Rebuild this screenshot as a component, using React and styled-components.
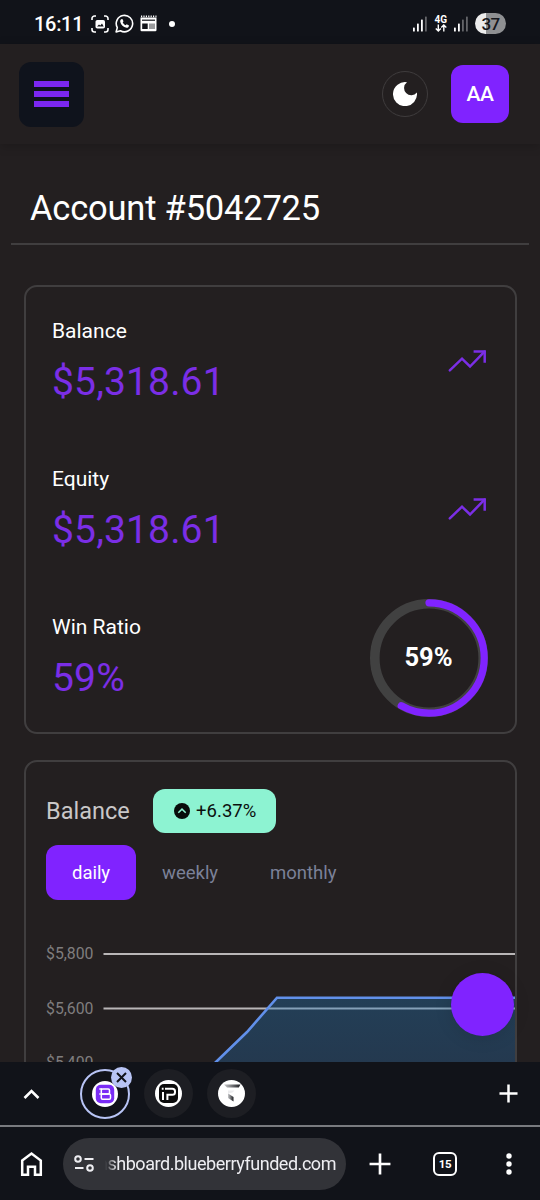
import styled, { createGlobalStyle } from "styled-components";

const GlobalStyle = createGlobalStyle`
    * {
        box-sizing: border-box;
    }

    body {
        margin: 0;
        background-color: #231f20;
        font-family: Roboto, "Liberation Sans", sans-serif;
    }

    svg {
        display: block;
    }
`;

const Screen = styled.div`
    position: relative;
    display: flex;
    flex-direction: column;
    width: 540px;
    height: 1200px;
    overflow: hidden;
`;

const StatusBar = styled.div`
    display: flex;
    justify-content: space-between;
    align-items: center;
    height: 44px;
    padding: 3px 34px 0 34px;
    background-color: #111319;
    color: white;
    flex-shrink: 0;
`;

const StatusGroup = styled.div`
    display: flex;
    align-items: center;
    gap: ${props => props.gap};
`;

const Time = styled.span`
    font-size: 20px;
    font-weight: 500;
    line-height: 24px;
    letter-spacing: -0.3px;
    margin-right: 2px;
`;

const Dot = styled.span`
    width: 6px;
    height: 6px;
    margin-left: 6px;
    border-radius: 50%;
    background-color: white;
`;

const Network = styled.div`
    display: flex;
    flex-direction: column;
    align-items: center;
    font-size: 10px;
    font-weight: 700;
    line-height: 9px;
`;

const Battery = styled.div`
    width: 31px;
    height: 21px;
    border-radius: 11px;
    background: linear-gradient(to right, #ececec 36%, #8f9092 36%);
    color: #15171c;
    font-size: 17px;
    font-weight: 500;
    line-height: 22px;
    letter-spacing: -0.6px;
    text-align: center;
`;

const Header = styled.header`
    display: flex;
    justify-content: space-between;
    align-items: center;
    height: 100px;
    padding: 0 31px 0 19px;
    box-shadow: 0 2px 10px rgba(0, 0, 0, 0.2);
    flex-shrink: 0;
`;

const MenuButton = styled.button`
    display: flex;
    flex-direction: column;
    align-items: center;
    justify-content: center;
    gap: 4.5px;
    width: 65px;
    height: 65px;
    padding: 0;
    border: none;
    border-radius: 12px;
    background-color: #0f131c;
`;

const MenuLine = styled.span`
    width: 35px;
    height: 5.5px;
    background-color: #7b27f0;
`;

const HeaderRight = styled.div`
    display: flex;
    align-items: center;
    gap: 23px;
`;

const ThemeButton = styled.button`
    display: flex;
    align-items: center;
    justify-content: center;
    width: 46px;
    height: 46px;
    padding: 0;
    border: 1px solid #3f3c3d;
    border-radius: 50%;
    background-color: transparent;
`;

const Avatar = styled.div`
    width: 58px;
    height: 58px;
    border-radius: 12px;
    background-color: #8023ff;
    color: white;
    font-size: 21px;
    font-weight: 500;
    line-height: 58px;
    letter-spacing: -0.4px;
    text-align: center;
`;

const Main = styled.main`
    flex: 1;
    min-height: 0;
    overflow: hidden;
`;

const Title = styled.h1`
    height: 101px;
    margin: 0 11px 40px;
    padding: 43px 0 0 19px;
    border-bottom: 2px solid #403e3f;
    color: white;
    font-size: 34.5px;
    font-weight: 400;
    line-height: 42px;
    letter-spacing: -0.2px;
`;

const Card = styled.section`
    height: ${props => props.height};
    margin: 0 23px 26px 24px;
    border: 2px solid #403e3f;
    border-radius: 13px;
    overflow: hidden;
`;

const Stat = styled.div`
    display: flex;
    align-items: center;
    justify-content: space-between;
    height: 148.4px;
    padding: 0 27px 0 26px;
`;

const StatLabel = styled.div`
    color: white;
    font-size: 21px;
    line-height: 30px;
    margin-bottom: 11px;
`;

const StatValue = styled.div`
    color: #7b2ee6;
    font-size: 39px;
    line-height: 50px;
    letter-spacing: 0.15px;
`;

const BalanceHead = styled.div`
    display: flex;
    align-items: center;
    height: 44px;
    margin: 27px 20px 12px;
    gap: 23px;
`;

const BalanceTitle = styled.h2`
    margin: 0;
    color: #c9c7c8;
    font-size: 23.5px;
    font-weight: 400;
`;

const Badge = styled.div`
    display: flex;
    align-items: center;
    justify-content: center;
    gap: 6px;
    width: 123px;
    height: 44px;
    padding-left: 2px;
    border-radius: 12px;
    background-color: #8df3d2;
    color: #0b0f0e;
    font-size: 18.5px;
`;

const Tabs = styled.div`
    display: flex;
    margin: 0 20px;
`;

const Tab = styled.button`
    height: 55px;
    padding: 0 26px;
    border: none;
    border-radius: 12px;
    background-color: ${props => props.$active ? "#8023ff" : "transparent"};
    color: ${props => props.$active ? "white" : "#7b8198"};
    font-family: inherit;
    font-size: 18.5px;
    line-height: 52px;
    letter-spacing: -0.03px;
`;

const ChatButton = styled.button`
    position: absolute;
    right: 26px;
    bottom: 164px;
    width: 63px;
    height: 63px;
    border: none;
    border-radius: 50%;
    background-color: #8023ff;
    box-shadow: 0 2px 18px rgba(0, 0, 0, 0.12);
`;

const TabStrip = styled.div`
    display: flex;
    align-items: center;
    justify-content: space-between;
    height: 65px;
    padding: 0 22px 0 22px;
    border-bottom: 2px solid #797b7f;
    background-color: #111319;
    flex-shrink: 0;
`;

const StripLeft = styled.div`
    display: flex;
    align-items: center;
`;

const OpenTabs = styled.div`
    display: flex;
    align-items: center;
    gap: 14px;
    margin-left: 39px;
`;

const OpenTab = styled.div`
    position: relative;
    display: flex;
    align-items: center;
    justify-content: center;
    width: ${props => props.$active ? "50px" : "49px"};
    height: ${props => props.$active ? "50px" : "49px"};
    border: ${props => props.$active ? "2px solid #b8c4f5" : "none"};
    border-radius: 50%;
    background-color: ${props => props.$active ? "transparent" : "#1d1e23"};
`;

const CloseBadge = styled.span`
    position: absolute;
    top: -4px;
    right: -4px;
    width: 21px;
    height: 21px;
    border-radius: 50%;
    background-color: #b8c4f5;
`;

const Toolbar = styled.div`
    display: flex;
    align-items: center;
    height: 73px;
    padding: 0 19px 0 19px;
    background-color: #111319;
    flex-shrink: 0;
`;

const AddressBar = styled.div`
    display: flex;
    align-items: center;
    width: 283px;
    height: 52px;
    margin: 0 23px 0 19px;
    padding-left: 11px;
    border-radius: 26px;
    background-color: #323338;
`;

const Url = styled.span`
    display: flex;
    justify-content: flex-end;
    width: 231px;
    margin-left: 11px;
    overflow: hidden;
    white-space: nowrap;
    color: #eeeef2;
    font-size: 18px;
    line-height: 24px;
    letter-spacing: -0.46px;
    mask-image: linear-gradient(to right, transparent, black 12px);
`;

const ToolbarRight = styled.div`
    flex: 1;
    display: flex;
    align-items: center;
    justify-content: space-between;
`;

const TabCount = styled.div`
    width: 24px;
    height: 24px;
    margin-left: 2px;
    border: 2.5px solid white;
    border-radius: 6px;
    color: white;
    font-size: 11.5px;
    font-weight: 700;
    line-height: 20px;
    letter-spacing: -0.4px;
    text-align: center;
`;

const TrendIcon = () => (
    <svg width="40" height="37" viewBox="0 0 40 37" fill="none" stroke="#7b2ee6" strokeWidth="2.5">
        <path d="M1.8 27.3L14 15.7L22 23.5L36.5 8.7" strokeLinecap="round" />
        <path d="M25.6 8.5H36.7V19.7" />
    </svg>
);

const SignalIcon = ({ level }) => (
    <svg width="14" height="16" viewBox="0 0 14 16" fill="white">
        {[4, 8, 12, 15].map((h, i) => (
            <rect key={h} x={i * 4} y={15.5 - h} width="1.8" height={h} rx="0.6" fillOpacity={i < level ? 1 : 0.35} />
        ))}
    </svg>
);

const PlusIcon = ({ size, width }) => (
    <svg width={size} height={size} viewBox="0 0 20 20" stroke="white" strokeWidth={width}>
        <path d="M10 0.5V19.5M0.5 10H19.5" />
    </svg>
);

const WinRing = ({ value }) => {
    const length = 2 * Math.PI * 55.2;

    return (
        <svg width="118" height="118" viewBox="0 0 118 118" fill="none">
            <circle cx="59" cy="59" r="54.2" stroke="#414141" strokeWidth="9.6" />
            <circle cx="59" cy="59" r="55.2" stroke="#8023ff" strokeWidth="7.2" strokeLinecap="round"
                strokeDasharray={`${length * (value - 0.7) / 100} ${length}`} transform="rotate(-90 59 59)" />
            <text x="58.5" y="67" fill="white" fontSize="25.5" fontWeight="700" textAnchor="middle">{value}%</text>
        </svg>
    );
};

const BalanceChart = () => (
    <svg width="489" height="200" viewBox="0 0 489 200">
        <defs>
            <linearGradient id="area" x1="0" y1="0" x2="0" y2="1">
                <stop offset="0" stopColor="#2378b8" stopOpacity="0.36" />
                <stop offset="1" stopColor="#2878c8" stopOpacity="0.25" />
            </linearGradient>
        </defs>
        {["$5,800", "$5,600", "$5,400"].map((label, i) => (
            <g key={label}>
                <text x="20" y={59 + i * 54.5} fill="#7f7d7e" fontSize="15.8">{label}</text>
                <rect x="77.5" y={53 + i * 54.5} width="412" height="2" fill="#b9b6b7" />
            </g>
        ))}
        <path d="M162 188L191 161L221 132L251 97.7H489V200H162Z" fill="url(#area)" />
        <path d="M162 188L191 161L221 132L251 97.7H489" fill="none" stroke="#6190ea" strokeWidth="2.6" />
    </svg>
);

const App = () => {
  return (
    <Screen>
        <GlobalStyle />
        <StatusBar>
            <StatusGroup gap="6px">
                <Time>16:11</Time>
                <svg width="18" height="18" viewBox="0 0 18 18" fill="none" stroke="white" strokeWidth="1.6">
                    <path d="M1 5V3.5A2.5 2.5 0 0 1 3.5 1H5M13 1H14.5A2.5 2.5 0 0 1 17 3.5V5M17 13V14.5A2.5 2.5 0 0 1 14.5 17H13M5 17H3.5A2.5 2.5 0 0 1 1 14.5V13" />
                    <rect x="4.5" y="5" width="9.5" height="8.5" rx="1.8" fill="white" stroke="none" />
                    <path d="M6 11.5L8 9.5L9.3 10.6L11 8.5L12.7 11.5Z" fill="#111319" stroke="none" />
                </svg>
                <svg width="19" height="19" viewBox="0 0 19 19" fill="none" stroke="white" strokeWidth="1.6">
                    <path d="M1.1 17.9L2.3 13.6A8.2 8.2 0 1 1 5.4 16.7Z" strokeLinejoin="round" />
                    <path d="M6.1 5.2L7.4 4.9L8.5 7.2L7.7 8.4C8.3 9.6 9.3 10.6 10.6 11.2L11.7 10.3L14 11.5C13.9 13.1 12.8 13.9 11.5 13.8C8.4 13.3 5.9 10.8 5.2 7.7C5.1 6.7 5.4 5.8 6.1 5.2Z" fill="white" stroke="none" />
                </svg>
                <svg width="17" height="17" viewBox="0 0 17 17">
                    <path d="M0.5 2.5H16.5V15A1.2 1.2 0 0 1 15.3 16.2H1.7A1.2 1.2 0 0 1 0.5 15Z" fill="white" />
                    <path d="M1 1.4H16.5" stroke="white" strokeWidth="1.6" strokeDasharray="1.2 1.2" />
                    <path d="M2 5.2H15" stroke="#111319" strokeWidth="1.2" />
                    <rect x="2.2" y="8.5" width="5.5" height="5.5" fill="#111319" />
                    <path d="M9 8.5H15V14H9Z" fill="#9a9b9d" />
                </svg>
                <Dot />
            </StatusGroup>
            <StatusGroup gap="7px">
                <SignalIcon level={3} />
                <Network>
                    4G
                    <svg width="12" height="8" viewBox="0 0 12 8" fill="none" stroke="white" strokeWidth="1.4">
                        <path d="M3.3 0.5V6.8M0.8 4.4L3.3 6.9L5.8 4.4M8.8 7.6V1.2M6.3 3.6L8.8 1.1L11.3 3.6" />
                    </svg>
                </Network>
                <SignalIcon level={2} />
                <Battery>37</Battery>
            </StatusGroup>
        </StatusBar>

        <Header>
            <MenuButton>
                <MenuLine />
                <MenuLine />
                <MenuLine />
            </MenuButton>
            <HeaderRight>
                <ThemeButton>
                    <svg width="24" height="24" viewBox="0 0 24 24" fill="white">
                        <path d="M14 0.3A12 12 0 1 0 23.9 10.6A7.2 7.2 0 1 1 14 0.3Z" />
                    </svg>
                </ThemeButton>
                <Avatar>AA</Avatar>
            </HeaderRight>
        </Header>

        <Main>
            <Title>Account #5042725</Title>
            <Card height="449px">
                <Stat>
                    <div>
                        <StatLabel>Balance</StatLabel>
                        <StatValue>$5,318.61</StatValue>
                    </div>
                    <TrendIcon />
                </Stat>
                <Stat>
                    <div>
                        <StatLabel>Equity</StatLabel>
                        <StatValue>$5,318.61</StatValue>
                    </div>
                    <TrendIcon />
                </Stat>
                <Stat>
                    <div>
                        <StatLabel>Win Ratio</StatLabel>
                        <StatValue>59%</StatValue>
                    </div>
                    <WinRing value={59} />
                </Stat>
            </Card>
            <Card height="600px">
                <BalanceHead>
                    <BalanceTitle>Balance</BalanceTitle>
                    <Badge>
                        <svg width="16" height="16" viewBox="0 0 16 16">
                            <circle cx="8" cy="8" r="8" fill="#080c0b" />
                            <path d="M4.3 9.7L8 6.1L11.7 9.7" fill="none" stroke="#8df3d2" strokeWidth="1.5" />
                        </svg>
                        +6.37%
                    </Badge>
                </BalanceHead>
                <Tabs>
                    <Tab $active>daily</Tab>
                    <Tab>weekly</Tab>
                    <Tab>monthly</Tab>
                </Tabs>
                <BalanceChart />
            </Card>
        </Main>
        <ChatButton />

        <TabStrip>
            <StripLeft>
                <svg width="19" height="12" viewBox="0 0 19 12" fill="none" stroke="white" strokeWidth="2.6">
                    <path d="M2.5 10L9.5 3L16.5 10" />
                </svg>
                <OpenTabs>
                    <OpenTab $active>
                        <svg width="26" height="26" viewBox="0 0 26 26">
                            <circle cx="13" cy="13" r="13" fill="white" />
                            <rect x="3.8" y="3.8" width="18.4" height="18.4" rx="5" fill="#7a2cf5" />
                            <rect x="9.3" y="8" width="8.2" height="5" rx="1.2" fill="none" stroke="white" strokeWidth="1.5" />
                            <rect x="9.3" y="13" width="9.2" height="5.2" rx="1.2" fill="none" stroke="white" strokeWidth="1.5" />
                            <path d="M7.3 8H10M7.3 13H10" stroke="white" strokeWidth="1.5" />
                        </svg>
                        <CloseBadge>
                            <svg width="21" height="21" viewBox="0 0 21 21" stroke="#111319" strokeWidth="2">
                                <path d="M6 6L15 15M15 6L6 15" />
                            </svg>
                        </CloseBadge>
                    </OpenTab>
                    <OpenTab>
                        <svg width="27" height="27" viewBox="0 0 27 27">
                            <circle cx="13.5" cy="13.5" r="13.5" fill="white" />
                            <rect x="4" y="4" width="19" height="19" rx="5" fill="#0b0b0b" />
                            <path d="M10 8.7H17.4Q20 8.7 20 11.3V12.2Q20 14.8 17.4 14.8H12.4V20M8 12V20M6.8 8.7H8.6" fill="none" stroke="white" strokeWidth="2" />
                        </svg>
                    </OpenTab>
                    <OpenTab>
                        <svg width="27" height="27" viewBox="0 0 27 27">
                            <defs>
                                <linearGradient id="fold" x1="0" y1="0" x2="1" y2="0">
                                    <stop offset="0" stopColor="#c9cacc" />
                                    <stop offset="1" stopColor="#1b1c20" />
                                </linearGradient>
                            </defs>
                            <circle cx="13.5" cy="13.5" r="13.5" fill="white" />
                            <path d="M6 4.5H22.5L20.8 7.5H9Z" fill="url(#fold)" />
                            <path d="M10 10.5H16.5L14.5 12.5L10 13.5Z" fill="#ececee" />
                            <path d="M10 13.5L15.5 17V21.5L10 18Z" fill="url(#fold)" />
                        </svg>
                    </OpenTab>
                </OpenTabs>
            </StripLeft>
            <PlusIcon size={19} width={2.6} />
        </TabStrip>

        <Toolbar>
            <svg width="25" height="26" viewBox="0 0 25 26" fill="none" stroke="white" strokeWidth="2.5">
                <path d="M3.2 9.5L12.5 2.5L21.8 9.5V23.7H16V15.7H9V23.7H3.2Z" />
            </svg>
            <AddressBar>
                <svg width="20" height="18" viewBox="0 0 20 18" fill="none" stroke="#eeeef2" strokeWidth="2">
                    <circle cx="4" cy="4" r="2.8" />
                    <circle cx="16" cy="13" r="2.8" />
                    <path d="M10.5 4H19.5M1 13H9.5" />
                </svg>
                <Url>ashboard.blueberryfunded.com</Url>
            </AddressBar>
            <ToolbarRight>
                <PlusIcon size={22} width={2.4} />
                <TabCount>15</TabCount>
                <svg width="24" height="24" viewBox="0 0 24 24" fill="white">
                    <circle cx="12" cy="4" r="2.7" />
                    <circle cx="12" cy="12" r="2.7" />
                    <circle cx="12" cy="20" r="2.7" />
                </svg>
            </ToolbarRight>
        </Toolbar>
    </Screen>
  )
}

export default App
